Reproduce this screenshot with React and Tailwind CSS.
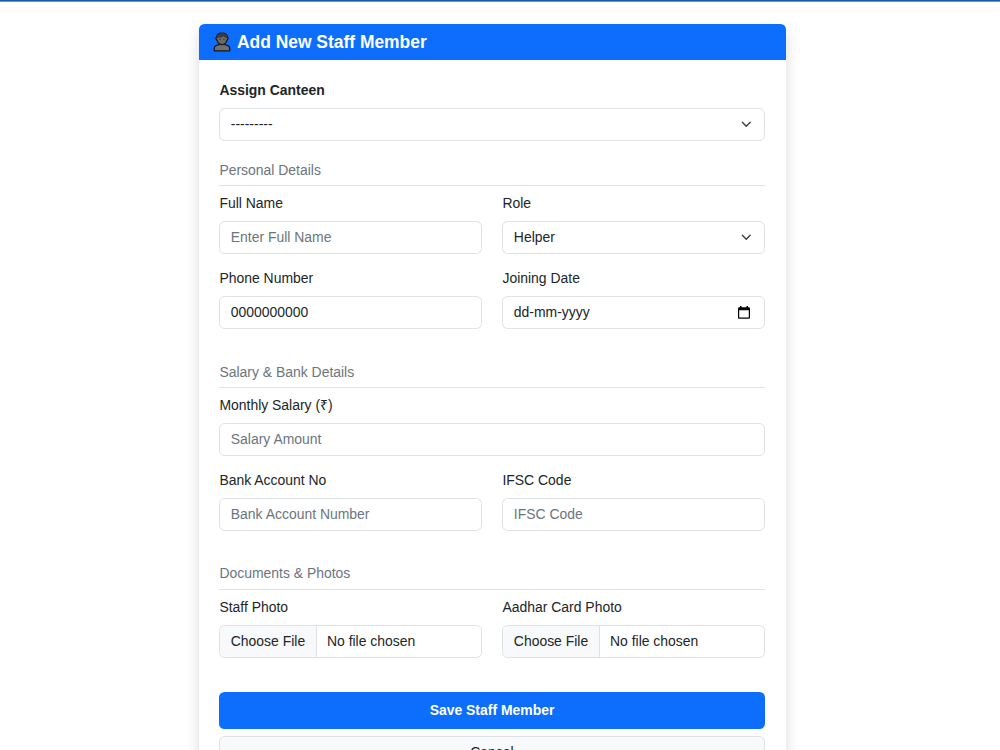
import { useState } from "react";

const controlClass =
  "block h-[33px] w-full rounded-[5.5px] border border-[#dee2e6] bg-white px-[10.4px] pb-px text-[13.94px] text-[#212529] placeholder:text-[#6c757d] outline-none focus:border-[#86b7fe]";

function StaffIcon() {
  return (
    <svg viewBox="0 0 18 20" className="h-5 w-[18px] shrink-0" fill="none">
      <path
        d="M6.5 11v1.500L3 13.700c-1.100.4-1.700 1.300-1.700 2.400v2.800h15.400v-2.800c0-1.100-.6-2-1.700-2.400l-3.500-1.200V11z"
        fill="#707070"
        stroke="#161616"
        strokeWidth="1.300"
        strokeLinejoin="round"
      />
      <path
        d="M9 1C5.800 1 3.700 2.700 3.500 5.200c-.9.600-.8 2.200.3 2.700.8 2.800 2.800 4.700 5.200 4.700s4.400-1.900 5.200-4.700c1.100-.5 1.200-2.100.3-2.700C14.300 2.700 12.200 1 9 1z"
        fill="#6a6a6a"
        stroke="#161616"
        strokeWidth="1.200"
      />
      <path
        d="M3.900 6C3.900 3.200 6 1.400 9 1.400s5.100 1.800 5.100 4.600c-1.600-.1-2.800-.7-3.600-1.700C8.900 5.600 6.700 6 3.900 6z"
        fill="#3a3a3a"
      />
      <circle cx="7" cy="7.300" r=".65" fill="#2a2a2a" />
      <circle cx="11" cy="7.300" r=".65" fill="#2a2a2a" />
    </svg>
  );
}

function CalendarIcon() {
  return (
    <svg viewBox="0 0 12 13" className="mr-[3px] h-[13px] w-3 shrink-0">
      <path
        d="M2 0h1.500v1.200h5V0H10v1.200h.7c.7 0 1.300.6 1.300 1.300v9c0 .7-.6 1.300-1.300 1.300H1.300C.6 12.800 0 12.200 0 11.500v-9c0-.7.6-1.300 1.300-1.300H2V0zM1.200 4.300v7.300h9.600V4.300H1.200z"
        fill="#000"
        fillRule="evenodd"
      />
    </svg>
  );
}

function Field({ label, htmlFor, bold, className = "", children }) {
  return (
    <div className={className}>
      <label
        htmlFor={htmlFor}
        className={`mb-[7px] block leading-[20.9px] ${bold ? "font-bold" : ""}`}
      >
        {label}
      </label>
      {children}
    </div>
  );
}

function Select({ id, value, onChange, options }) {
  return (
    <div className="grid items-center">
      <select
        id={id}
        name={id}
        value={value}
        onChange={onChange}
        className={`${controlClass} col-start-1 row-start-1 appearance-none`}
      >
        {options.map((option) => (
          <option key={option}>{option}</option>
        ))}
      </select>
      <svg
        viewBox="0 0 16 16"
        className="pointer-events-none col-start-1 row-start-1 mr-[12.9px] size-[10.5px] justify-self-end"
      >
        <path
          d="m2 5 6 6 6-6"
          fill="none"
          stroke="#343a40"
          strokeWidth="2"
          strokeLinecap="round"
          strokeLinejoin="round"
        />
      </svg>
    </div>
  );
}

function FileInput({ id }) {
  return (
    <input
      id={id}
      name={id}
      type="file"
      className="block h-[33px] w-full overflow-hidden rounded-[5.5px] border border-[#dee2e6] bg-white text-[13.94px] leading-[31px] file:mr-[10.4px] file:h-[31px] file:border-0 file:border-r file:border-solid file:border-[#dee2e6] file:bg-[#f8f9fa] file:px-[10.4px] file:text-[#212529]"
    />
  );
}

function SectionTitle({ children }) {
  return (
    <h6 className="mb-[7px] border-b border-[#dee2e6] pb-[6.5px] leading-[16.7px] text-[#6c757d]">
      {children}
    </h6>
  );
}

export default function App() {
  const [form, setForm] = useState({
    canteen: "---------",
    fullName: "",
    role: "Helper",
    phone: "0000000000",
    joiningDate: "",
    salary: "",
    account: "",
    ifsc: "",
  });

  const handleChange = (e) => {
    const { name, value } = e.target;
    setForm({ ...form, [name]: value });
  };

  return (
    <div className="h-screen overflow-hidden border-t border-[#1c5bab] bg-white font-['Liberation_Sans',Arial,sans-serif] text-[13.94px] text-[#212529]">
      <div className="h-px bg-[#6a94cb]" />
      <div className="mt-[22px] ml-[198.5px] w-[587px] rounded-[5.5px] bg-white pb-5 shadow-[0_7px_14px_rgba(0,0,0,0.15)]">
        {/* Header */}
        <div className="flex h-[35.7px] items-center gap-[6px] rounded-t-[5.5px] bg-[#0d6efd] px-[14.500px] text-white">
          <StaffIcon />
          <h4 className="text-[17.43px] font-bold">Add New Staff Member</h4>
        </div>

        <form
          onSubmit={(e) => e.preventDefault()}
          className="px-[20.900px] pt-[20.500px]"
        >
          <Field label="Assign Canteen" htmlFor="canteen" bold className="mb-[20.900px]">
            <Select
              id="canteen"
              value={form.canteen}
              onChange={handleChange}
              options={["---------"]}
            />
          </Field>

          {/* Personal details */}
          <SectionTitle>Personal Details</SectionTitle>
          <div className="mb-[34.800px] grid grid-cols-2 gap-x-[20.900px] gap-y-[13.900px]">
            <Field label="Full Name" htmlFor="fullName">
              <input
                id="fullName"
                name="fullName"
                value={form.fullName}
                onChange={handleChange}
                placeholder="Enter Full Name"
                className={controlClass}
              />
            </Field>
            <Field label="Role" htmlFor="role">
              <Select
                id="role"
                value={form.role}
                onChange={handleChange}
                options={["Helper"]}
              />
            </Field>
            <Field label="Phone Number" htmlFor="phone">
              <input
                id="phone"
                name="phone"
                value={form.phone}
                onChange={handleChange}
                className={controlClass}
              />
            </Field>
            <Field label="Joining Date" htmlFor="joiningDate">
              <div className="flex h-[33px] items-center rounded-[5.5px] border border-[#dee2e6] px-[10.4px]">
                <input
                  id="joiningDate"
                  name="joiningDate"
                  value={form.joiningDate}
                  onChange={handleChange}
                  placeholder="dd-mm-yyyy"
                  className="min-w-0 flex-1 outline-none placeholder:text-[#212529]"
                />
                <CalendarIcon />
              </div>
            </Field>
          </div>

          {/* Salary and bank */}
          <SectionTitle>Salary &amp; Bank Details</SectionTitle>
          <div className="mb-[34.800px] grid grid-cols-2 gap-x-[20.900px] gap-y-[13.900px]">
            <Field label="Monthly Salary (₹)" htmlFor="salary" className="col-span-2">
              <input
                id="salary"
                name="salary"
                value={form.salary}
                onChange={handleChange}
                placeholder="Salary Amount"
                className={controlClass}
              />
            </Field>
            <Field label="Bank Account No" htmlFor="account">
              <input
                id="account"
                name="account"
                value={form.account}
                onChange={handleChange}
                placeholder="Bank Account Number"
                className={controlClass}
              />
            </Field>
            <Field label="IFSC Code" htmlFor="ifsc">
              <input
                id="ifsc"
                name="ifsc"
                value={form.ifsc}
                onChange={handleChange}
                placeholder="IFSC Code"
                className={controlClass}
              />
            </Field>
          </div>

          {/* Documents */}
          <SectionTitle>Documents &amp; Photos</SectionTitle>
          <div className="mb-[34.800px] grid grid-cols-2 gap-x-[20.900px]">
            <Field label="Staff Photo" htmlFor="staffPhoto">
              <FileInput id="staffPhoto" />
            </Field>
            <Field label="Aadhar Card Photo" htmlFor="aadharPhoto">
              <FileInput id="aadharPhoto" />
            </Field>
          </div>

          <div className="grid gap-[7px]">
            <button
              type="submit"
              className="h-[36.500px] rounded-[5.5px] bg-[#0d6efd] pb-px font-bold text-white"
            >
              Save Staff Member
            </button>
            <button
              type="button"
              className="h-[33px] rounded-[5.5px] border border-[#dee2e6] bg-[#f8f9fa]"
            >
              Cancel
            </button>
          </div>
        </form>
      </div>
    </div>
  );
}
